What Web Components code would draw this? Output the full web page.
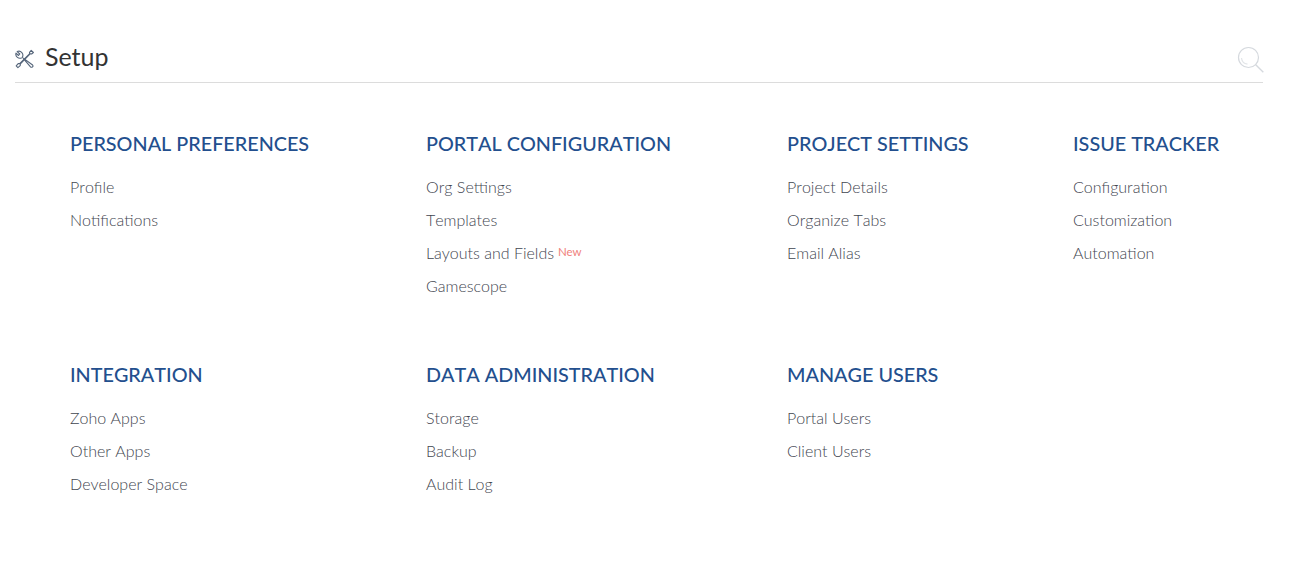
<!DOCTYPE html>
<html><head><meta charset="utf-8">
<style>
html,body{margin:0;padding:0;background:#fff;font-family:Lato,sans-serif}
</style></head><body>
<setup-page>
<setup-header slot="header">Setup</setup-header>
<setup-section title="PERSONAL PREFERENCES"><setup-link>Profile</setup-link><setup-link>Notifications</setup-link></setup-section>
<setup-section title="PORTAL CONFIGURATION"><setup-link>Org Settings</setup-link><setup-link>Templates</setup-link><setup-link badge="New">Layouts and Fields</setup-link><setup-link>Gamescope</setup-link></setup-section>
<setup-section title="PROJECT SETTINGS"><setup-link>Project Details</setup-link><setup-link>Organize Tabs</setup-link><setup-link>Email Alias</setup-link></setup-section>
<setup-section title="ISSUE TRACKER"><setup-link>Configuration</setup-link><setup-link>Customization</setup-link><setup-link>Automation</setup-link></setup-section>
<setup-section title="INTEGRATION"><setup-link>Zoho Apps</setup-link><setup-link>Other Apps</setup-link><setup-link>Developer Space</setup-link></setup-section>
<setup-section title="DATA ADMINISTRATION"><setup-link>Storage</setup-link><setup-link>Backup</setup-link><setup-link>Audit Log</setup-link></setup-section>
<setup-section title="MANAGE USERS"><setup-link>Portal Users</setup-link><setup-link>Client Users</setup-link></setup-section>
</setup-page>
<script>
function def(name,html){customElements.define(name,class extends HTMLElement{constructor(){super();this.attachShadow({mode:'open'}).innerHTML=html}})}
def('setup-page',`<style>:host{display:block;padding:38px 41px 0 15px;width:1248px}
.grid{display:grid;grid-template-columns:356px 361px 286px auto;grid-auto-rows:231px;padding:48px 0 0 55px}</style>
<slot name="header"></slot><div class="grid"><slot></slot></div>`);
def('setup-header',`<style>:host{display:flex;align-items:flex-start;height:44px;border-bottom:1px solid #dcdcdc;color:#333;font:400 25px/38px Lato,sans-serif}
svg{flex:none}.i{width:20px;height:20px;margin:11px 10px 0 0}.s{width:27px;height:27px;margin:8px -1px 0 auto}
span{margin-top:-1px}</style>
<svg class="i" viewBox="0 0 20 20" fill="none" stroke="#55657a" stroke-width="1.100" stroke-linejoin="round"><path d="M7.200 8.400 17.600 16a1.400 1.400 0 0 1-.1 1.900 1.400 1.400 0 0 1-2 0L8.400 9.600M7.200 8.400A4 4 0 0 0 2.200 2.600l2.600 2.400-1.300 1.500-2.500-2.400A4 4 0 0 0 6.800 8.700"/><path d="m16.200 1.400 2.200 2.100-1.800 1.500-1.200-.3L5.400 14.800l-.2 1.800-2.300 2-1.700-1.700 2-2.300 1.700-.2 9.800-9.800-.2-1.300z"/></svg>
<span><slot></slot></span>
<svg class="s" viewBox="0 0 27 27" fill="none" stroke="#d5d9de" stroke-width="1.200"><circle cx="11.500" cy="11.500" r="10"/><path d="M4.500 12a7 7 0 0 0 6 6.200" stroke="#e2e5e8"/><path d="m18.500 18.500 7.800 7.800" stroke-width="1.400"/></svg>`);
customElements.define('setup-section',class extends HTMLElement{constructor(){super();const r=this.attachShadow({mode:'open'});
r.innerHTML=`<style>:host{display:block;white-space:nowrap}
h2{margin:0 0 15px;font:500 19.800px/24px Lato,sans-serif;font-kerning:none;color:#234f8e}
.l{display:flex;flex-direction:column}</style><h2></h2><div class="l"><slot></slot></div>`;
r.querySelector('h2').textContent=this.getAttribute('title')}});
customElements.define('setup-link',class extends HTMLElement{constructor(){super();const r=this.attachShadow({mode:'open'});const b=this.getAttribute('badge');
r.innerHTML=`<style>:host{display:block;font:300 16px/33px Lato,sans-serif;font-kerning:none;color:#3f4650}
sup{font:400 11.500px/11px Lato,sans-serif;color:#f0827c;vertical-align:3px;margin-left:4px}</style><slot></slot>`+(b?`<sup>${b}</sup>`:'')}});
</script></body></html>
